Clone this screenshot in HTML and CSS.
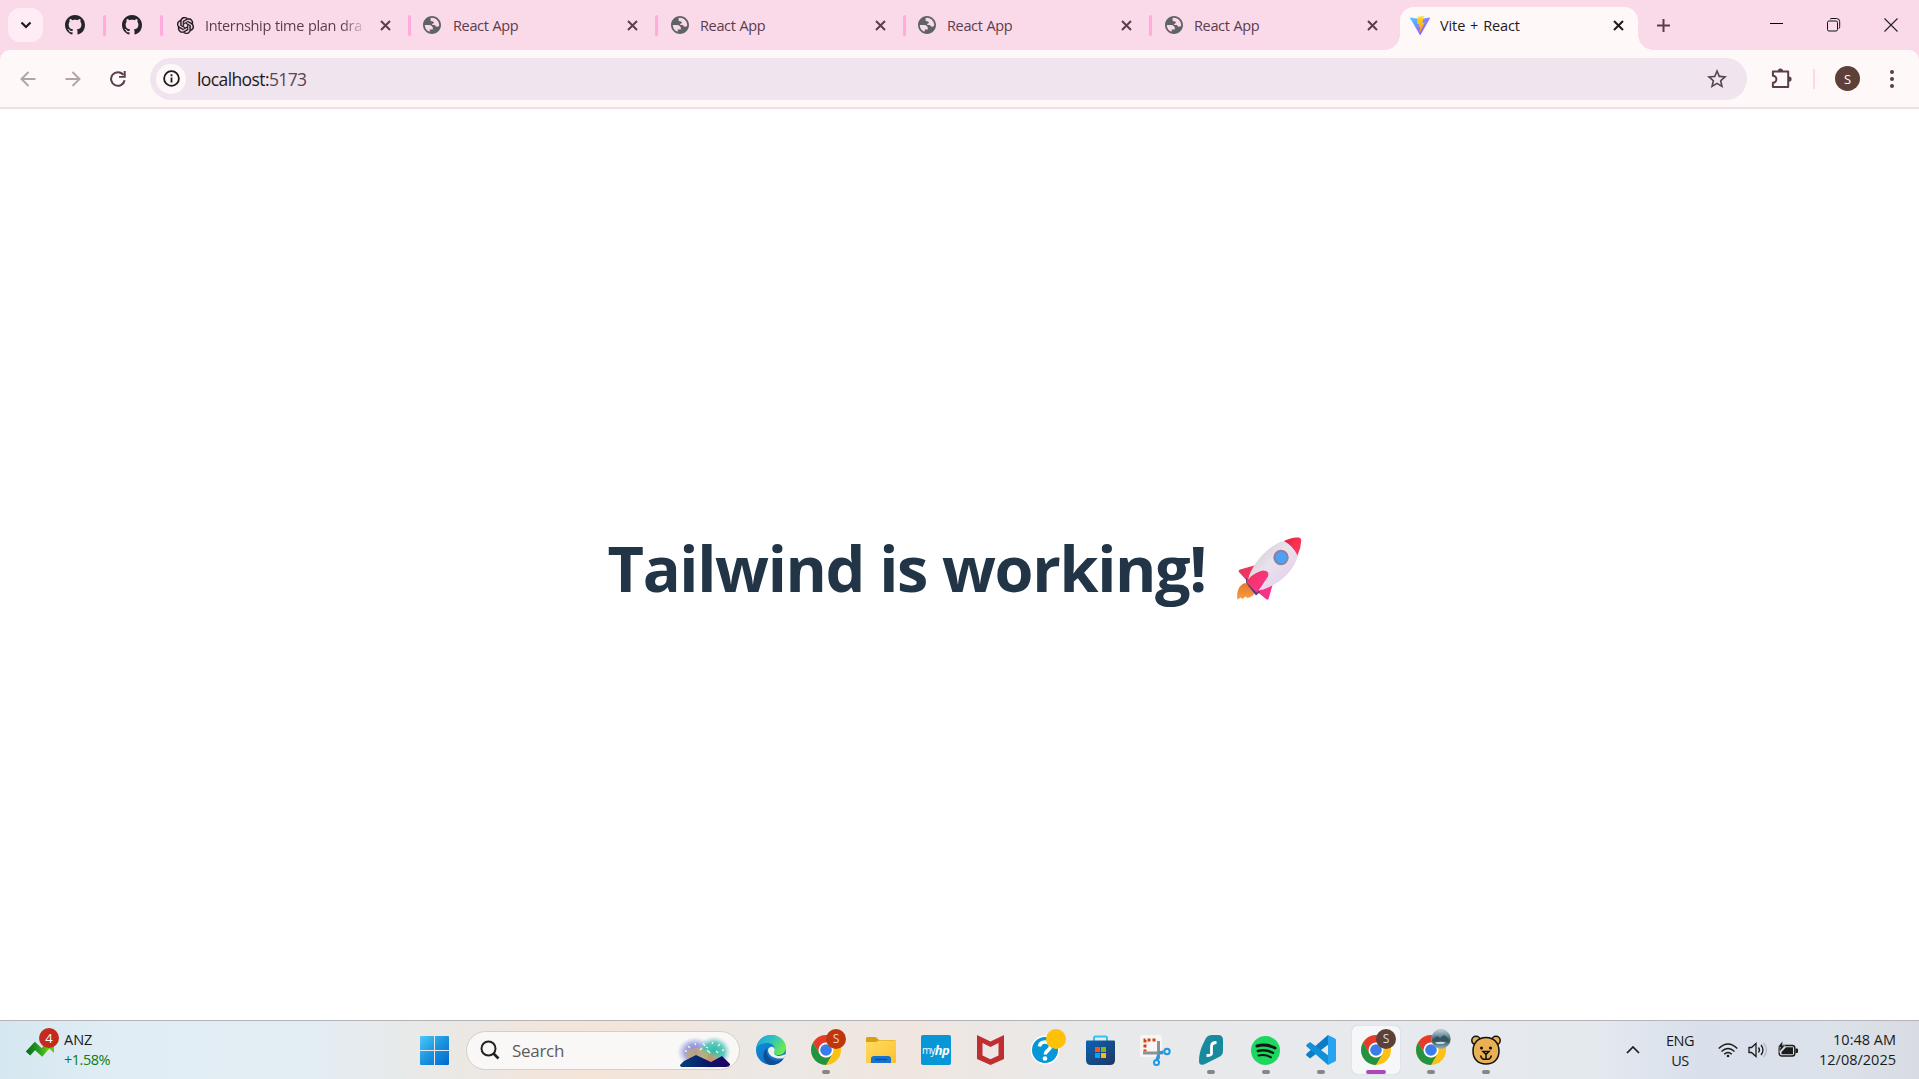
FILE: index.html
```html
<!DOCTYPE html>
<html lang="en">
<head>
<meta charset="utf-8">
<title>Vite + React</title>
<link rel="stylesheet" href="styles.css">
</head>
<body>
<svg class="defs" width="0" height="0" aria-hidden="true">
  <defs>
    <linearGradient id="viteV" x1="0" y1="0" x2="1" y2="1"><stop offset="0" stop-color="#41d1ff"/><stop offset="1" stop-color="#bd34fe"/></linearGradient>
    <linearGradient id="viteBolt" x1="0" y1="0" x2="0" y2="1"><stop offset="0" stop-color="#ffea83"/><stop offset=".2" stop-color="#ffd024"/><stop offset="1" stop-color="#ff9b00"/></linearGradient>
    <linearGradient id="win" x1="0" y1="0" x2="1" y2="1"><stop offset="0" stop-color="#4cc9f8"/><stop offset=".5" stop-color="#1a93e0"/><stop offset="1" stop-color="#0069cf"/></linearGradient>
    <linearGradient id="body" x1="0" y1="0" x2="1" y2="1"><stop offset="0" stop-color="#c9c2c9"/><stop offset=".45" stop-color="#eae2ee"/><stop offset="1" stop-color="#e0c8e8"/></linearGradient>
    <linearGradient id="nose" x1="0" y1="0" x2="1" y2="1"><stop offset="0" stop-color="#d81f3c"/><stop offset=".5" stop-color="#f9304f"/><stop offset="1" stop-color="#ff3a5e"/></linearGradient>
    <linearGradient id="fin" x1="0" y1="0" x2="1" y2="1"><stop offset="0" stop-color="#e5364f"/><stop offset=".6" stop-color="#fb3480"/><stop offset="1" stop-color="#f52f90"/></linearGradient>
    <linearGradient id="flame" x1="0" y1="0" x2="0" y2="1"><stop offset="0" stop-color="#e07a2a"/><stop offset="1" stop-color="#fd9b45"/></linearGradient>
    <linearGradient id="edgeTop" x1="0" y1="0" x2="1" y2=".5"><stop offset="0" stop-color="#1c9fdc"/><stop offset=".5" stop-color="#2cc1c5"/><stop offset="1" stop-color="#6bea50"/></linearGradient>
    <linearGradient id="edgeLow" x1="0" y1="0" x2="1" y2="1"><stop offset="0" stop-color="#1193dd"/><stop offset="1" stop-color="#0a62bd"/></linearGradient>
    <linearGradient id="folder" x1="0" y1="0" x2="1" y2="1"><stop offset="0" stop-color="#ffdc62"/><stop offset="1" stop-color="#fcc02e"/></linearGradient>
    <linearGradient id="store" x1="0" y1="0" x2="1" y2="1"><stop offset="0" stop-color="#0a63b5"/><stop offset="1" stop-color="#22365f"/></linearGradient>
    <linearGradient id="stock" x1="0" y1="0" x2="1" y2="0"><stop offset="0" stop-color="#0e6f1c"/><stop offset=".45" stop-color="#259a20"/><stop offset="1" stop-color="#6fd40b"/></linearGradient>
    <linearGradient id="photo" x1="0" y1="0" x2="0" y2="1"><stop offset="0" stop-color="#c8d5dc"/><stop offset=".4" stop-color="#5d8193"/><stop offset=".6" stop-color="#38545a"/><stop offset="1" stop-color="#8fb3c4"/></linearGradient>
    <linearGradient id="hill" x1="0" y1="0" x2="1" y2="0"><stop offset="0" stop-color="#05407c"/><stop offset=".6" stop-color="#0c1668"/><stop offset="1" stop-color="#240062"/></linearGradient>
    <radialGradient id="glowA"><stop offset="0" stop-color="#7f86d8"/><stop offset=".55" stop-color="#8a90dc" stop-opacity=".8"/><stop offset="1" stop-color="#a9b0ea" stop-opacity="0"/></radialGradient>
    <radialGradient id="glowB"><stop offset="0" stop-color="#1fb9a4"/><stop offset=".6" stop-color="#3cc0b4" stop-opacity=".8"/><stop offset="1" stop-color="#8fd8e0" stop-opacity="0"/></radialGradient>
    <radialGradient id="glowC"><stop offset="0" stop-color="#f07a52"/><stop offset="1" stop-color="#e9b06a" stop-opacity="0"/></radialGradient>
    <symbol id="github" viewBox="0 0 16 16"><path fill="#24242c" d="M8 0C3.58 0 0 3.58 0 8c0 3.54 2.29 6.53 5.47 7.59.4.07.55-.17.55-.38 0-.19-.01-.82-.01-1.49-2.01.37-2.53-.49-2.69-.94-.09-.23-.48-.94-.82-1.13-.28-.15-.68-.52-.01-.53.63-.01 1.08.58 1.23.82.72 1.21 1.87.87 2.33.66.07-.52.28-.87.51-1.07-1.78-.2-3.64-.89-3.64-3.95 0-.87.31-1.59.82-2.15-.08-.2-.36-1.02.08-2.12 0 0 .67-.21 2.2.82.64-.18 1.32-.27 2-.27s1.36.09 2 .27c1.53-1.04 2.2-.82 2.2-.82.44 1.1.16 1.92.08 2.12.51.56.82 1.27.82 2.15 0 3.07-1.87 3.75-3.65 3.95.29.25.54.73.54 1.48 0 1.07-.01 1.93-.01 2.2 0 .21.15.46.55.38A8.01 8.01 0 0 0 16 8c0-4.42-3.58-8-8-8Z"/></symbol>
    <symbol id="globe" viewBox="2 2 20 20"><path fill="#5f6368" d="M12 2C6.48 2 2 6.48 2 12s4.48 10 10 10 10-4.48 10-10S17.520 2 12 2ZM4 12h4.400c3.407.022 4.922 1.730 4.543 5.127H9.488v2.470A8.004 8.004 0 0 1 4 12Zm16 0c0 .220-.009.440-.027.655C19.400 13.550 18.560 14 17.456 14c-1.210 0-1.830-.620-1.860-1.870h-3.320c-.180-1.410.460-2.130 1.920-2.130 0-1.670-1.380-2.520-3.720-2.580V4.150A8 8 0 0 1 20 12Z"/></symbol>
    <symbol id="x" viewBox="0 0 11 11"><path d="M1 1l9 9M10 1l-9 9" fill="none" stroke="currentColor" stroke-width="2"/></symbol>
    <symbol id="chrome" viewBox="0 0 30 30">
      <circle cx="15" cy="15" r="15" fill="#fbc116"/>
      <path fill="#e33b2e" d="M2.010 7.500A15 15 0 0 1 27.990 7.500H15L8.500 18.700Z"/>
      <path fill="#229342" d="M2.010 7.500A15 15 0 0 0 15 30L21.500 18.750A7.500 7.500 0 0 1 8.500 18.750Z"/>
      <circle cx="15" cy="15" r="7.500" fill="#fff"/><circle cx="15" cy="15" r="5.800" fill="#3a7de8"/>
    </symbol>
  </defs>
</svg>

<div class="screen">
  <header class="tabstrip">
    <button class="tab-search"><svg width="12" height="8" viewBox="0 0 12 8"><path d="M1.500 1.500L6 6l4.500-4.500" fill="none" stroke="#1f1a1e" stroke-width="2.200"/></svg></button>
    <div class="tab pinned first"><svg width="20" height="20"><use href="#github"/></svg></div>
    <div class="tab pinned"><svg width="20" height="20"><use href="#github"/></svg></div>
    <div class="tab chat">
      <svg width="17" height="17" viewBox="0 0 24 24" fill="#17131a" stroke="#17131a" stroke-width=".5"><path d="M22.282 9.821a5.985 5.985 0 0 0-.516-4.910 6.046 6.046 0 0 0-6.510-2.900A6.065 6.065 0 0 0 4.981 4.182a5.985 5.985 0 0 0-3.998 2.900 6.046 6.046 0 0 0 .743 7.097 5.980 5.980 0 0 0 .510 4.911 6.051 6.051 0 0 0 6.515 2.900A5.985 5.985 0 0 0 13.260 24a6.056 6.056 0 0 0 5.772-4.206 5.990 5.990 0 0 0 3.998-2.900 6.056 6.056 0 0 0-.748-7.073zM13.260 22.430a4.476 4.476 0 0 1-2.876-1.040l.142-.081 4.778-2.758a.795.795 0 0 0 .393-.681v-6.737l2.020 1.169a.071.071 0 0 1 .038.052v5.583a4.504 4.504 0 0 1-4.495 4.494zM3.600 18.304a4.470 4.470 0 0 1-.535-3.014l.142.085 4.783 2.759a.771.771 0 0 0 .780 0l5.843-3.369v2.332a.080.080 0 0 1-.033.062L9.740 19.950a4.500 4.500 0 0 1-6.140-1.646zM2.340 7.896a4.485 4.485 0 0 1 2.366-1.973V11.600a.766.766 0 0 0 .388.677l5.815 3.354-2.020 1.169a.076.076 0 0 1-.071 0l-4.830-2.787A4.504 4.504 0 0 1 2.340 7.872zm16.597 3.855l-5.833-3.387L15.119 7.200a.076.076 0 0 1 .071 0l4.830 2.791a4.494 4.494 0 0 1-.676 8.105v-5.678a.790.790 0 0 0-.407-.667zm2.010-3.023l-.141-.085-4.774-2.782a.776.776 0 0 0-.785 0L9.409 9.230V6.897a.066.066 0 0 1 .028-.061l4.830-2.787a4.499 4.499 0 0 1 6.680 4.660zM8.307 12.863l-2.020-1.164a.080.080 0 0 1-.038-.057V6.075a4.499 4.499 0 0 1 7.375-3.453l-.142.080L8.704 5.460a.795.795 0 0 0-.393.681zm1.097-2.365l2.602-1.500 2.607 1.500v2.999l-2.597 1.500-2.607-1.500z"/></svg>
      <span class="title fade">Internship time plan dra</span><svg class="close" width="11" height="11"><use href="#x"/></svg>
    </div>
    <div class="tab react-a"><svg width="18" height="18"><use href="#globe"/></svg><span class="title">React App</span><svg class="close" width="11" height="11"><use href="#x"/></svg></div>
    <div class="tab react-b"><svg width="18" height="18"><use href="#globe"/></svg><span class="title">React App</span><svg class="close" width="11" height="11"><use href="#x"/></svg></div>
    <div class="tab react-c"><svg width="18" height="18"><use href="#globe"/></svg><span class="title">React App</span><svg class="close" width="11" height="11"><use href="#x"/></svg></div>
    <div class="tab react-d"><svg width="18" height="18"><use href="#globe"/></svg><span class="title">React App</span><svg class="close" width="11" height="11"><use href="#x"/></svg></div>
    <div class="tab active">
      <svg width="20" height="20" viewBox="0 0 32 32"><path fill="url(#viteV)" d="M31.900 5.300L17 31.400a.8.800 0 0 1-1.400 0L.2 5.300a.8.800 0 0 1 .900-1.200l15 2.700 14.900-2.700a.8.800 0 0 1 .900 1.200z"/><path fill="url(#viteBolt)" d="M23 .7L11.900 2.900l-.7 12 3.500-.7-.9 4.900 3-.8-1.800 9 .8.300L23.600 12l-4 .7z"/></svg>
      <span class="title">Vite + React</span><svg class="close" width="11" height="11"><use href="#x"/></svg>
    </div>
    <svg class="new-tab" width="13" height="13" viewBox="0 0 13 13"><path d="M6.500 0v13M0 6.500h13" stroke="#5a3d4c" stroke-width="2"/></svg>
    <div class="window-controls">
      <svg width="14" height="14" viewBox="0 0 14 14"><path d="M0 5.500h13" stroke="#000"/></svg>
      <svg width="14" height="14" viewBox="0 0 14 14" fill="none" stroke="#111"><rect x=".5" y="3" width="10" height="10" rx="1.500"/><path d="M3 1.200Q3.500.5 5 .5h4.500Q12.700.5 12.700 3.700v5q0 1.500-1 2"/></svg>
      <svg width="14" height="14" viewBox="0 0 14 14"><path d="M.5.500l13 13M13.500.500l-13 13" stroke="#222" stroke-width="1.100"/></svg>
    </div>
  </header>

  <nav class="toolbar">
    <svg class="nav-icon" width="16" height="16" viewBox="0 0 16 16" fill="none" stroke="#b0a4a9" stroke-width="1.900"><path d="M15.500 8H2M8.500 1L1.500 8l7 7"/></svg>
    <svg class="nav-icon" width="16" height="16" viewBox="0 0 16 16" fill="none" stroke="#b0a4a9" stroke-width="1.900"><path d="M.5 8H14M7.500 1l7 7-7 7"/></svg>
    <svg class="nav-icon" width="16" height="16" viewBox="0 0 16 16"><path d="M14.600 9.200A6.800 6.800 0 1 1 13.400 4" fill="none" stroke="#5a3d4c" stroke-width="2"/><path d="M15.700 0v6.700H9V5h4.700V0z" fill="#5a3d4c"/></svg>
    <div class="omnibox">
      <span class="site-info"><svg width="17" height="17" viewBox="0 0 17 17"><circle cx="8.500" cy="8.500" r="7.400" fill="none" stroke="#1f1a1e" stroke-width="1.800"/><path d="M8.500 7.500v5M8.500 4.300v1.900" stroke="#1f1a1e" stroke-width="1.800"/></svg></span>
      <span class="url">localhost:<span class="port">5173</span></span>
      <svg class="star" width="20" height="20" viewBox="2 2 20 20"><path fill="#55464f" d="M22 9.240l-7.190-.620L12 2 9.190 8.630 2 9.240l5.460 4.730L5.820 21 12 17.270 18.180 21l-1.630-7.030L22 9.240zM12 15.400l-3.760 2.270 1-4.280-3.320-2.880 4.380-.380L12 6.100l1.710 4.040 4.380.380-3.320 2.880 1 4.280L12 15.400z"/></svg>
    </div>
    <svg class="puzzle" width="21" height="21" viewBox="0 0 21 21"><path d="M1.900 3.500h15.300v15.600H1.900v-4.300a3.500 3.500 0 0 0 0-7z" fill="none" stroke="#5a3d4c" stroke-width="2" stroke-linejoin="round"/><path d="M6.800 3a2.600 2.600 0 0 1 5.200 0zM18 8.500a2.600 2.600 0 0 1 0 5.200z" fill="#5a3d4c"/></svg>
    <i class="divider"></i>
    <span class="avatar">S</span>
    <svg class="menu" width="4" height="18" viewBox="0 0 4 18" fill="#5a3d4c"><circle cx="2" cy="2" r="2"/><circle cx="2" cy="9" r="2"/><circle cx="2" cy="16" r="2"/></svg>
  </nav>

  <main class="page">
    <h1><span class="words">Tailwind is working!</span>
      <svg class="rocket" width="66" height="64" viewBox="0 0 66 64">
        <path fill="url(#flame)" d="M8 46C2 48-.5 54 .3 62.500l3.500-2 1.700 1.500 3-2.500 2 1.500C15 60 18 57 19 53z"/>
        <path fill="url(#fin)" d="M19 28L3 32.500Q1 33.500 2 35l8 9 7-14zM36 46.500L31.500 62Q30.500 63.500 29 62l-9-7.500z"/>
        <path fill="url(#body)" d="M48 3.500C32 8 18 23 12 39l13 14C43 47 56 35 61.500 18z"/>
        <path fill="url(#nose)" d="M47 4Q56-.5 62 .6q2.500.6 2.200 3.400-.3 7-3.700 14.500Q56 9 47 4z"/>
        <path fill="#4c3d7c" d="M9 41l14 14-4 3.500L9 46z"/>
        <path fill="url(#fin)" d="M9 45c3-5 9-9.500 17-11.500q7 0 5 6L20 56z"/>
        <circle cx="44" cy="20.500" r="7.700" fill="#8a82a0"/><circle cx="44.200" cy="20.500" r="5.600" fill="#4aa2fa"/>
      </svg>
    </h1>
  </main>

  <footer class="taskbar">
    <div class="widget">
      <svg class="stock" width="29" height="22" viewBox="0 0 29 22"><path d="M2 17.500L9 10l7 6.500L24 7" fill="none" stroke="url(#stock)" stroke-width="6"/><path d="M14 3.500h14V17z" fill="#65c90d"/></svg>
      <span class="count">4</span>
      <div class="quote"><span>ANZ</span><span class="gain">+1.58%</span></div>
    </div>

    <svg class="start" width="29" height="29" viewBox="0 0 29 29" fill="url(#win)"><path d="M0 1q0-1 1-1h13v14H0zM15 0h13q1 0 1 1v13H15zM0 15h14v14H1q-1 0-1-1zM15 15h14v13q0 1-1 1H15z"/></svg>

    <div class="search">
      <svg width="20" height="20" viewBox="0 0 20 20" fill="none" stroke="#222"><circle cx="8.500" cy="8.500" r="7" stroke-width="2"/><path d="M13.500 13.500l5 5" stroke-width="2.600"/></svg>
      <span>Search</span>
      <svg class="scene" width="54" height="32" viewBox="0 0 54 32">
        <ellipse cx="18" cy="16" rx="18" ry="15" fill="url(#glowA)"/><ellipse cx="37" cy="16" rx="17" ry="16" fill="url(#glowB)"/>
        <ellipse cx="20" cy="19" rx="11" ry="7" fill="#d8ad55" opacity=".6"/><circle cx="34" cy="24" r="10" fill="url(#glowC)"/>
        <path fill="url(#hill)" d="M3 29l4-4 12-6 15 7 11-6 8 8v1q-1 2-4 2H6q-3 0-3-2z"/>
        <g stroke="#fff6d0" stroke-width="1.300"><path d="M11 10l2 2M18 7l.7 2M8 15h2M26 7l2 3M31 12l-2-1M36 6l-1 2M43 8l-2 2M47 14l-2 .5M30 14l3 3M25 12l-2 2M39 15l2 2"/></g>
      </svg>
    </div>

    <div class="apps">
      <div class="app"><svg width="30" height="30" viewBox="0 0 30 30"><circle cx="15" cy="15" r="15" fill="url(#edgeLow)"/><path fill="url(#edgeTop)" d="M.3 12.500C2 4 8 0 15 0c8.500 0 15 6 15 12.500 0 5-4 8-8.500 7.500-3.500-.5-4.500-2-3.500-3.500 2-3 0-8-6-8.500-5-.3-9.500 1.500-11.700 4.500z"/><path fill="#104e96" d="M11 13c-2 6 3 13 10 13q4 0 7-3C24 30 16 31 12.500 29.500 6 26 6 17 11 13z"/><path fill="#efefee" d="M12 15c0-3 5-5 6.500-1.500 1 2-1 3-.5 4.500.8 3 6 4 10 1.500q2-.5 1 1.500l-1.500 2C22 25 12 22 12 15z"/></svg></div>
      <div class="app running"><svg width="30" height="30"><use href="#chrome"/></svg><span class="badge red">S</span></div>
      <div class="app"><svg width="30" height="26" viewBox="0 0 30 26"><path fill="#dba012" d="M0 1.500Q0 0 1.500 0H9q1.500 0 2.500 1.500L13 3h15q2 0 2 2v8H0z"/><path fill="url(#folder)" d="M0 5h10l3-1.500h16q1 0 1 1V25q0 1-1 1H1q-1 0-1-1z"/><path fill="#1474cf" d="M5 26v-4q0-3 3-3h14q3 0 3 3v4z"/><path d="M9 22.500h12" stroke="#0a4f9e" stroke-width="1.500"/></svg></div>
      <div class="app"><span class="hp"><span>my</span><b>hp</b></span></div>
      <div class="app"><svg width="27" height="30" viewBox="0 0 27 30"><path fill="#c12e31" fill-rule="evenodd" d="M0 0l13.500 6.500L27 0v24l-13.500 6L0 24zM5.500 8v12.500l8 3.700 8-3.700V8l-8 4z"/></svg></div>
      <div class="app"><svg width="30" height="30" viewBox="0 0 30 30"><circle cx="14" cy="15" r="14.500" fill="#fff"/><circle cx="14" cy="15" r="13" fill="#0796d6"/><path d="M8.500 11.500Q9 7 14 7q5.500 0 5.500 4.500c0 4-5 3.500-5.300 8" fill="none" stroke="#fff" stroke-width="3.600"/><circle cx="14" cy="23.500" r="2.300" fill="#fff"/></svg><span class="badge yellow"></span></div>
      <div class="app"><svg width="29" height="30" viewBox="0 0 29 30"><path d="M8 7V3q0-1.500 1.500-1.500h10Q21 1.500 21 3v4" fill="none" stroke="#2cc5f4" stroke-width="2"/><path fill="url(#store)" d="M0 6.500q0-1 1-1h27q1 0 1 1V25q0 5-5 5H5q-5 0-5-5z"/><path fill="#f35325" d="M9 12h5v5H9z"/><path fill="#81bc06" d="M15 12h5v5h-5z"/><path fill="#05a6f0" d="M9 18h5v5H9z"/><path fill="#ffba08" d="M15 18h5v5h-5z"/></svg></div>
      <div class="app"><svg width="31" height="31" viewBox="0 0 31 31"><rect width="22" height="22" rx="2" fill="#f7f6f5"/><path d="M15.500 5H5v11.500" fill="none" stroke="#d24113" stroke-width="3" stroke-dasharray="3 2"/><path d="M18.500 6v18M3 18h20" stroke="#8d9299" stroke-width="3"/><path d="M18.500 18l5-1M18.500 20l-1.500 5" stroke="#2a96dc" stroke-width="3"/><g fill="none" stroke="#2097e3" stroke-width="2"><circle cx="27" cy="16.500" r="2.700"/><circle cx="16.500" cy="27.500" r="2.500"/></g></svg></div>
      <div class="app running"><svg width="24" height="30" viewBox="0 0 24 30"><path fill="#178a9e" d="M7 3Q9 0 13 0h6q5 0 5 5v11q0 4-4 6L5 29.500Q0 31 0 26q0-9 4-17z"/><path d="M17.500 7.500q-5 0-5 4v7q0 2-5 2" fill="none" stroke="#fff" stroke-width="2.800"/></svg></div>
      <div class="app running"><svg width="29" height="29" viewBox="0 0 29 29"><circle cx="14.500" cy="14.500" r="14.500" fill="#1ed760"/><g fill="none" stroke="#101a14" stroke-linecap="round"><path d="M6 10q9.500-2.500 18 2" stroke-width="3"/><path d="M6.800 15q8-2 15.200 1.800" stroke-width="2.500"/><path d="M7.500 19.500q7-1.500 12.500 1.800" stroke-width="2"/></g></svg></div>
      <div class="app running"><svg width="30" height="30" viewBox="0 0 30 30"><path fill="#0c7cc4" d="M22 0l1 9L4 23.500l-3.500-3q-.7-1 .2-2z"/><path fill="#1190d8" d="M.7 11.500q-.9-1 0-2L4 7l19 14-1 9z"/><path fill="#27a3f2" d="M22 0l7 3.500q1 .5 1 1.500v20q0 1-1 1.500L22 30z"/></svg></div>
      <div class="app running current"><svg width="30" height="30"><use href="#chrome"/></svg><span class="badge brown">S</span></div>
      <div class="app running"><svg width="30" height="30"><use href="#chrome"/></svg><svg class="badge" width="20" height="20" viewBox="0 0 20 20"><circle cx="10" cy="10" r="9.700" fill="url(#photo)" stroke="#9da7ad" stroke-width=".7"/><path d="M2 10l4-3 3 2 4-3 5 4-3 2H4z" fill="#365461"/><path d="M4 13.500q6-1.500 11 0l-3 1.500H6z" fill="#c3d8e2"/></svg></div>
      <div class="app running"><svg width="30" height="30" viewBox="0 0 30 30" fill="#e9b054" stroke="#111" stroke-width="1.500"><circle cx="5" cy="5.500" r="4.200"/><circle cx="25" cy="5.500" r="4.200"/><path d="M15 2.500C23 2.500 28 8 28 16c0 8-5 13-13 13S2 24 2 16C2 8 7 2.500 15 2.500z"/><path d="M12 16.500h6l-3 3zM15 19.500v5M15 24q-4 1.500-5.500-3.500M15 24q4 1.500 5.500-3.500" fill="none"/><circle cx="10.500" cy="13" r=".8"/><circle cx="19.500" cy="13" r=".8"/></svg></div>
    </div>

    <div class="tray">
      <svg class="chevron" width="14" height="8" viewBox="0 0 14 8"><path d="M1 7l6-6 6 6" fill="none" stroke="#1b1b1b" stroke-width="1.700"/></svg>
      <div class="lang"><span>ENG</span><span>US</span></div>
      <svg class="wifi" width="20" height="15" viewBox="0 0 20 15" fill="none" stroke="#1b1b1b" stroke-width="1.400"><path d="M.7 5.500q9.300-9 18.600 0M3.500 8.500q6.500-6 13 0M6.200 11.300q3.800-3.500 7.600 0"/><circle cx="10" cy="13" r="1.300" fill="#1b1b1b" stroke="none"/></svg>
      <svg class="volume" width="20" height="16" viewBox="0 0 20 16" fill="none" stroke="#1b1b1b" stroke-width="1.300"><path d="M1 5.500h2.500L8 1.500v13l-4.500-4H1z"/><path d="M10.500 5.500q2 2.500 0 5M13 3q4 5 0 10"/><path d="M15.500 1q6 7 0 14" stroke="#b5b9c0"/></svg>
      <svg class="battery" width="20" height="16" viewBox="0 0 20 16"><rect x="1.200" y="4.500" width="15.600" height="10.500" rx="2.500" fill="none" stroke="#1b1b1b" stroke-width="1.400"/><path fill="#1b1b1b" d="M3.500 13.200V11L8 6.300h7v6.900zM17.500 7.500H19q1 0 1 1V11q0 1-1 1h-1.500z"/><path d="M4.500 0L0 6h2.500L1 11.500 7 4.500H4.300z" fill="#1b1b1b" stroke="#dce3ee" stroke-width=".4"/></svg>
      <div class="clock"><span>10:48 AM</span><span>12/08/2025</span></div>
    </div>
  </footer>
</div>
</body>
</html>
```
FILE: styles.css
```css
* { box-sizing: border-box; }
body { margin: 0; font-family: "Segoe UI", "Open Sans", "Noto Sans", sans-serif; }
svg { display: block; flex: none; }
.defs { position: absolute; }
.screen { width: 1919px; height: 1079px; overflow: hidden; display: flex; flex-direction: column; background: #fff; }

/* Tab strip */
.tabstrip { position: relative; z-index: 1; height: 50px; flex: none; display: flex; align-items: center; background: #fad9e9; }
.tab-search { width: 35px; height: 34px; margin-left: 8px; padding: 0; border: 0; border-radius: 12px; background: #ffecf5; display: grid; place-items: center; }
.tab { height: 50px; display: flex; align-items: center; flex: none; color: #5a3d4c; }
.tab:not(.active)::after { content: ""; width: 3px; height: 21px; border-radius: 2px; background: #ffabdd; flex: none; }
.pinned { width: 57px; justify-content: space-between; padding-left: 16px; }
.pinned.first { width: 63px; padding-left: 22px; }
.title { font-size: 14.5px; letter-spacing: -0.35px; word-spacing: 0.6px; white-space: nowrap; overflow: hidden; flex: 1; margin: 0 0 0 12px; }
.title.fade { margin-left: 11px; -webkit-mask-image: linear-gradient(90deg, #000 137px, transparent 162px); mask-image: linear-gradient(90deg, #000 137px, transparent 162px); }
.close { margin-right: 17px; }
.chat { width: 248px; padding-left: 14px; }
.react-a { width: 247px; padding-left: 12px; }
.react-b { width: 248px; padding-left: 13px; }
.react-b .title, .react-c .title, .react-d .title { margin-left: 11px; }
.react-c { width: 246px; padding-left: 12px; }
.react-d { width: 248px; padding-left: 13px; }
.react-d .close { margin-right: 19px; }
.tab.react-d::after { background: transparent; }
.active { position: relative; width: 238px; height: 43px; margin-top: 7px; padding: 0 0 7px 10px; border-radius: 14px 14px 0 0; background: #fff8f8; color: #1f1a1e; }
.active .title { margin-left: 10px; letter-spacing: -0.1px; word-spacing: 1.2px; }
.active .close { margin-right: 14px; }
.active::before, .active::after { content: ""; position: absolute; bottom: 0; width: 15px; height: 15px; }
.active::before { left: -15px; background: radial-gradient(circle at 0 0, transparent 14.5px, #fff8f8 15px); }
.active::after { right: -15px; background: radial-gradient(circle at 100% 0, transparent 14.5px, #fff8f8 15px); }
.new-tab { margin-left: 19px; }
.window-controls { display: flex; gap: 43px; margin: 0 21px 0 auto; }

/* Toolbar */
.toolbar { position: relative; height: 59px; flex: none; display: flex; align-items: center; background: #fff8f8; border-bottom: 2px solid #f2dde3; border-radius: 10px 10px 0 0; padding-left: 20px; box-shadow: 0 -10px 0 #fad9e9; }
.nav-icon { margin-right: 29px; }
.nav-icon:nth-child(3) { margin-right: 24px; }
.omnibox { width: 1597px; height: 42px; border-radius: 21px; background: #f0e4ee; display: flex; align-items: center; padding: 0 20px 0 6px; }
.site-info { width: 30px; height: 30px; border-radius: 50%; background: #fff8f8; display: grid; place-items: center; }
.url { margin-left: 11px; padding-top: 1px; font-size: 17.5px; letter-spacing: -0.6px; color: #1f1a1e; flex: 1; }
.port { color: #5a4550; }
.puzzle { margin-left: 24px; }
.divider { width: 2px; height: 20px; margin-left: 21px; background: #ffd6ea; }
.avatar { width: 25px; height: 25px; margin-left: 20px; border-radius: 50%; background: #5d4037; color: #fff; font-size: 13px; display: grid; place-items: center; }
.menu { margin-left: 30px; }

/* Page */
.page { flex: 1; display: flex; justify-content: center; align-items: center; padding: 7px 9px 0 0; }
h1 { margin: 0; display: flex; align-items: center; font-size: 63px; line-height: 1; font-weight: 700; color: #213547; white-space: nowrap; width: 695px; }
.words { letter-spacing: -1.35px; margin-top: -2px; }
.rocket { margin: 1px 0 0 auto; }

/* Taskbar */
.taskbar { height: 59px; flex: none; display: flex; align-items: center; border-top: 1px solid #b5b5b8; background: linear-gradient(90deg, #d5e7f0 0, #e1edf5 120px, #e3edf4 310px, #e9e9e7 430px, #f5e4d8 590px, #ebe8e5 780px, #f0e6df 900px, #e9e9ea 1080px, #e6eaee 1450px, #e4e9ef 1600px, #d9e0ec 1700px, #dce2ea 1830px, #d8dce2 1919px); font-size: 14.5px; }
.widget { position: relative; width: 420px; display: flex; align-items: center; padding-left: 26px; }
.stock { margin-top: -6px; }
.count { position: absolute; left: 39px; top: -2px; width: 20px; height: 20px; border-radius: 50%; background: #c42b1c; color: #fff; font-size: 13px; line-height: 20px; text-align: center; }
.quote, .lang, .clock { display: flex; flex-direction: column; line-height: 20px; color: #1b1b1b; letter-spacing: -0.5px; }
.quote { margin-left: 9px; }
.quote span:first-child { letter-spacing: 0; }
.gain { color: #0f7b0f; }
.search { width: 274px; height: 39px; margin: 0 3px 0 17px; border: 1px solid #d2cfcc; border-radius: 20px; background: #faf8f6; display: flex; align-items: center; padding: 0 8px 0 13px; font-size: 17px; color: #5c5c5c; }
.search span { flex: 1; margin-left: 12px; letter-spacing: -0.3px; }
.scene { margin-top: 4px; }
.apps { display: grid; grid-template-columns: repeat(14, 55px); }
.app { position: relative; height: 58px; display: grid; place-items: center; }
.running::after { content: ""; position: absolute; bottom: 5px; left: 24px; width: 8px; height: 4px; border-radius: 2px; background: #868686; }
.current::before { content: ""; position: absolute; inset: 5px 3px 5px 4px; border-radius: 5px; background: #f6f7f9; box-shadow: 0 0 1px #aaa; }
.current > svg { position: relative; }
.current::after { left: 18px; width: 20px; background: #ab47bc; }
.badge { position: absolute; left: 28px; top: 8px; width: 20px; height: 20px; border-radius: 50%; font-size: 12px; line-height: 20px; text-align: center; color: #f3cdbf; }
.red { background: #bf360c; }
.yellow { background: #ffc107; }
.brown { background: #5d4037; color: #ddd; }
.hp { width: 30px; height: 30px; border-radius: 2px; background: #0796d6; color: #fff; display: flex; align-items: center; justify-content: center; font: 10px/1 "Open Sans", sans-serif; letter-spacing: -0.7px; }
.hp b { font-size: 13px; font-style: italic; }
.tray { flex: 1; display: flex; align-items: center; padding: 0 23px 0 113px; }
.lang { width: 44px; margin-left: 18px; text-align: center; padding-top: 2px; }
.wifi { margin-left: 16px; }
.volume { margin-left: 10px; }
.battery { margin: -3px 0 0 10px; }
.clock { margin-left: auto; text-align: right; white-space: nowrap; letter-spacing: 0; }
```
